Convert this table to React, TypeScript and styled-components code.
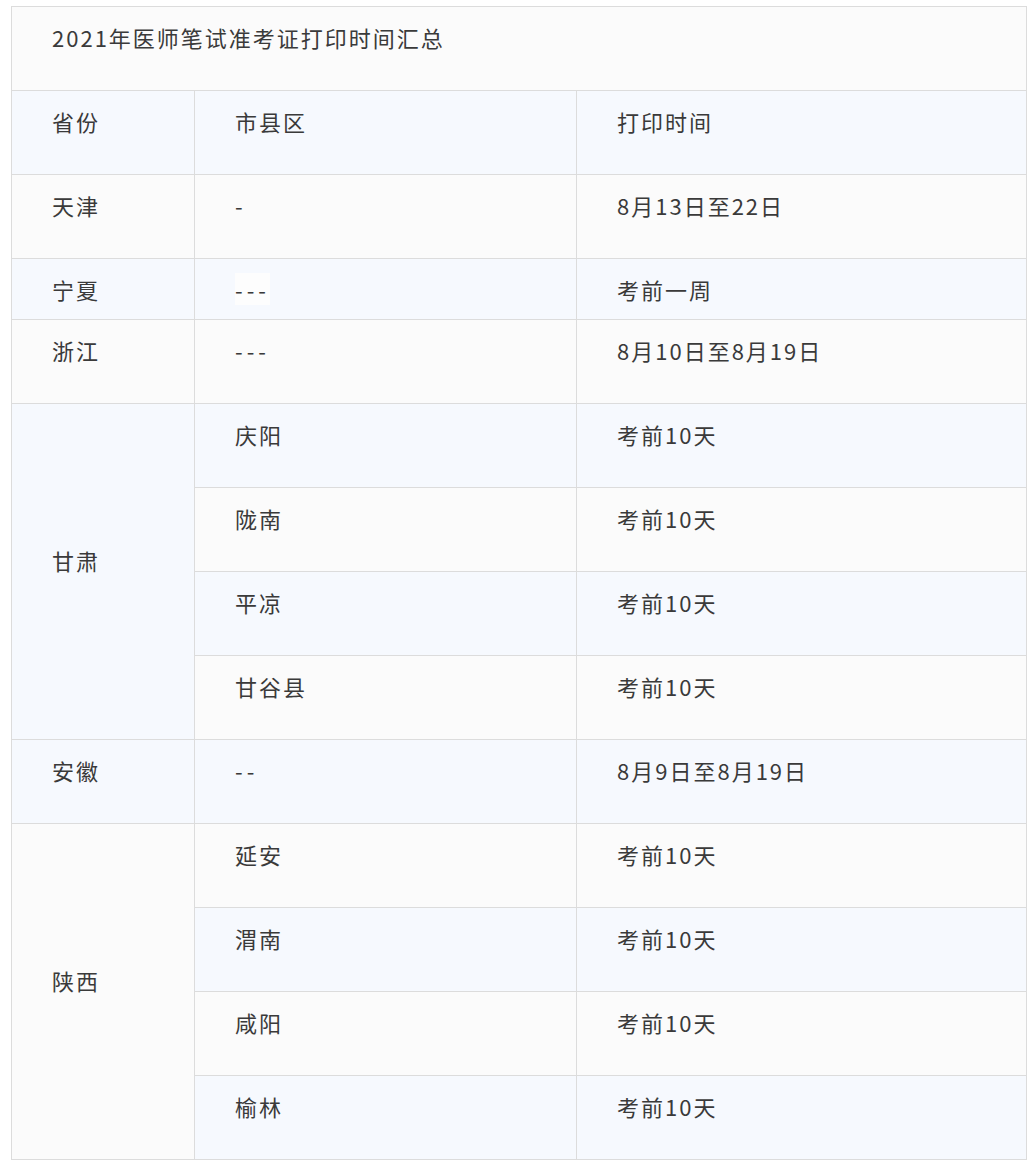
import React from "react";
import styled, { createGlobalStyle } from "styled-components";

const GlobalStyle = createGlobalStyle`
  html, body {
    margin: 0;
    padding: 0;
    background: #ffffff;
  }
  body {
    font-family: "Noto Sans CJK SC", "Noto Sans", sans-serif;
  }
`;

const Page = styled.div`
  padding: 6px 6px 0 11px;
`;

const Table = styled.table`
  width: 1015px;
  table-layout: fixed;
  border-collapse: collapse;
  font-size: 22px;
  line-height: 26px;
  letter-spacing: 2px;
  color: #3a3a3a;
`;

const Row = styled.tr<{ $tone: "plain" | "blue" }>`
  background: ${(p) => (p.$tone === "blue" ? "#f6f9fe" : "#fbfbfb")};
`;

const Cell = styled.td<{ $compact?: boolean }>`
  border: 1px solid #dcdcdc;
  padding: ${(p) => (p.$compact ? "17px 40px 17px" : "17px 40px 40px")};
  vertical-align: middle;
  text-align: left;
  font-weight: 400;
`;

const Dashes = styled.span<{ $marked?: boolean }>`
  letter-spacing: 4px;
  background: ${(p) => (p.$marked ? "#fdfdfd" : "transparent")};
`;

type Entry = {
  province?: { name: string; span: number };
  city: string;
  time: string;
  tone: "plain" | "blue";
  compact?: boolean;
  marked?: boolean;
};

const rows: Entry[] = [
  { province: { name: "天津", span: 1 }, city: "-", time: "8月13日至22日", tone: "plain" },
  { province: { name: "宁夏", span: 1 }, city: "---", time: "考前一周", tone: "blue", compact: true, marked: true },
  { province: { name: "浙江", span: 1 }, city: "---", time: "8月10日至8月19日", tone: "plain" },
  { province: { name: "甘肃", span: 4 }, city: "庆阳", time: "考前10天", tone: "blue" },
  { city: "陇南", time: "考前10天", tone: "plain" },
  { city: "平凉", time: "考前10天", tone: "blue" },
  { city: "甘谷县", time: "考前10天", tone: "plain" },
  { province: { name: "安徽", span: 1 }, city: "--", time: "8月9日至8月19日", tone: "blue" },
  { province: { name: "陕西", span: 4 }, city: "延安", time: "考前10天", tone: "plain" },
  { city: "渭南", time: "考前10天", tone: "blue" },
  { city: "咸阳", time: "考前10天", tone: "plain" },
  { city: "榆林", time: "考前10天", tone: "blue" },
];

const isDash = (s: string) => /^-+$/.test(s);

export default function App() {
  return (
    <Page>
      <GlobalStyle />
      <Table>
        <colgroup>
          <col style={{ width: 183 }} />
          <col style={{ width: 382 }} />
          <col style={{ width: 450 }} />
        </colgroup>
        <tbody>
          <Row $tone="plain">
            <Cell colSpan={3}>2021年医师笔试准考证打印时间汇总</Cell>
          </Row>
          <Row $tone="blue">
            <Cell>省份</Cell>
            <Cell>市县区</Cell>
            <Cell>打印时间</Cell>
          </Row>
          {rows.map((r, i) => (
            <Row key={i} $tone={r.tone}>
              {r.province && (
                <Cell rowSpan={r.province.span} $compact={r.compact}>
                  {r.province.name}
                </Cell>
              )}
              <Cell $compact={r.compact}>
                {isDash(r.city) ? <Dashes $marked={r.marked}>{r.city}</Dashes> : r.city}
              </Cell>
              <Cell $compact={r.compact}>{r.time}</Cell>
            </Row>
          ))}
        </tbody>
      </Table>
    </Page>
  );
}
